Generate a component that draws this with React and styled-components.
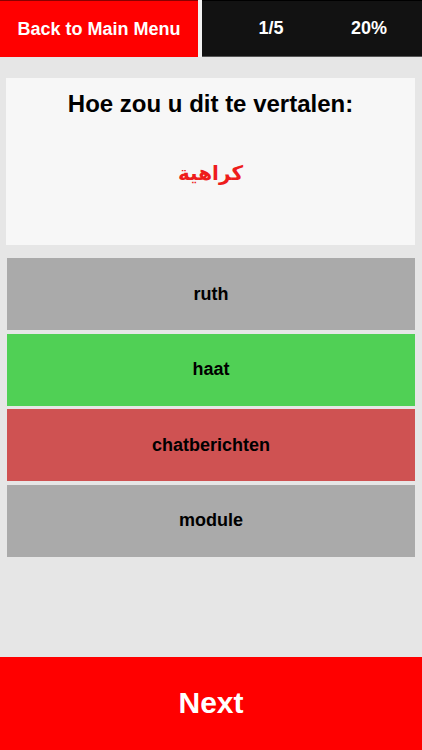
import React from 'react'
import styled, { createGlobalStyle } from 'styled-components'

const GlobalStyle = createGlobalStyle`
    html, body {
        margin: 0;
        padding: 0;
        background: #e6e6e6;
    }
    body {
        font-family: 'Liberation Sans', Arial, sans-serif;
    }
`

const Screen = styled.div`
    display: flex;
    flex-direction: column;
    height: 100vh;
    background: #e6e6e6;
`

const TopBar = styled.div`
    display: flex;
    height: 57px;
    background: #f2f2f2;
    gap: 4px;
`

const BackButton = styled.button`
    width: 198px;
    border: none;
    border-top: 1px solid #8a0000;
    background: #ff0000;
    color: #fff;
    font-family: 'Liberation Sans', Arial, sans-serif;
    font-weight: bold;
    font-size: 18px;
    padding: 0;
    cursor: pointer;
`

const Stats = styled.div`
    flex: 1;
    display: grid;
    grid-template-columns: 1fr 1fr;
    align-items: center;
    padding: 0 4px 0 20px;
    background: #121212;
    border-top: 1px solid #000;
    border-bottom: 1px solid #555;
`

const Stat = styled.span`
    text-align: center;
    color: #fff;
    font-weight: bold;
    font-size: 18px;
`

const Main = styled.div`
    flex: 1;
    display: flex;
    flex-direction: column;
    padding: 21px 7px 0 6px;
`

const QuestionCard = styled.div`
    height: 167px;
    box-sizing: border-box;
    background: #f7f7f7;
    padding-top: 11px;
    text-align: center;
`

const Prompt = styled.h2`
    margin: 0;
    font-size: 24px;
    line-height: 29px;
    font-weight: bold;
    color: #000;
`

const Word = styled.div`
    margin-top: 40px;
    font-family: 'DejaVu Sans', 'Noto Sans', sans-serif;
    font-weight: bold;
    font-size: 20px;
    line-height: 30px;
    color: #ee1c1c;
`

const Options = styled.div`
    display: flex;
    flex-direction: column;
    gap: 3.5px;
    margin-top: 13px;
    padding-left: 1px;
`

const colors = {
    neutral: '#aaaaaa',
    correct: '#50d055',
    wrong: '#cf5252',
}

const Option = styled.button`
    height: 72px;
    border: none;
    padding: 0;
    background: ${props => colors[props.$state]};
    color: #000;
    font-family: 'Liberation Sans', Arial, sans-serif;
    font-weight: bold;
    font-size: 18px;
    cursor: pointer;
`

const NextButton = styled.button`
    height: 93px;
    border: none;
    padding: 0 0 2px;
    background: #ff0000;
    color: #fff;
    font-family: 'Liberation Sans', Arial, sans-serif;
    font-weight: bold;
    font-size: 30px;
    cursor: pointer;
`

const answers = [
    { label: 'ruth', state: 'neutral' },
    { label: 'haat', state: 'correct' },
    { label: 'chatberichten', state: 'wrong' },
    { label: 'module', state: 'neutral' },
]

const App = () => {
    return (
        <>
            <GlobalStyle/>
            <Screen>
                <TopBar>
                    <BackButton>Back to Main Menu</BackButton>
                    <Stats>
                        <Stat>1/5</Stat>
                        <Stat>20%</Stat>
                    </Stats>
                </TopBar>

                <Main>
                    <QuestionCard>
                        <Prompt>Hoe zou u dit te vertalen:</Prompt>
                        <Word dir="rtl">كراهية</Word>
                    </QuestionCard>

                    <Options>
                        {answers.map(answer => (
                            <Option key={answer.label} $state={answer.state}>{answer.label}</Option>
                        ))}
                    </Options>
                </Main>

                <NextButton>Next</NextButton>
            </Screen>
        </>
    )
}

export default App
